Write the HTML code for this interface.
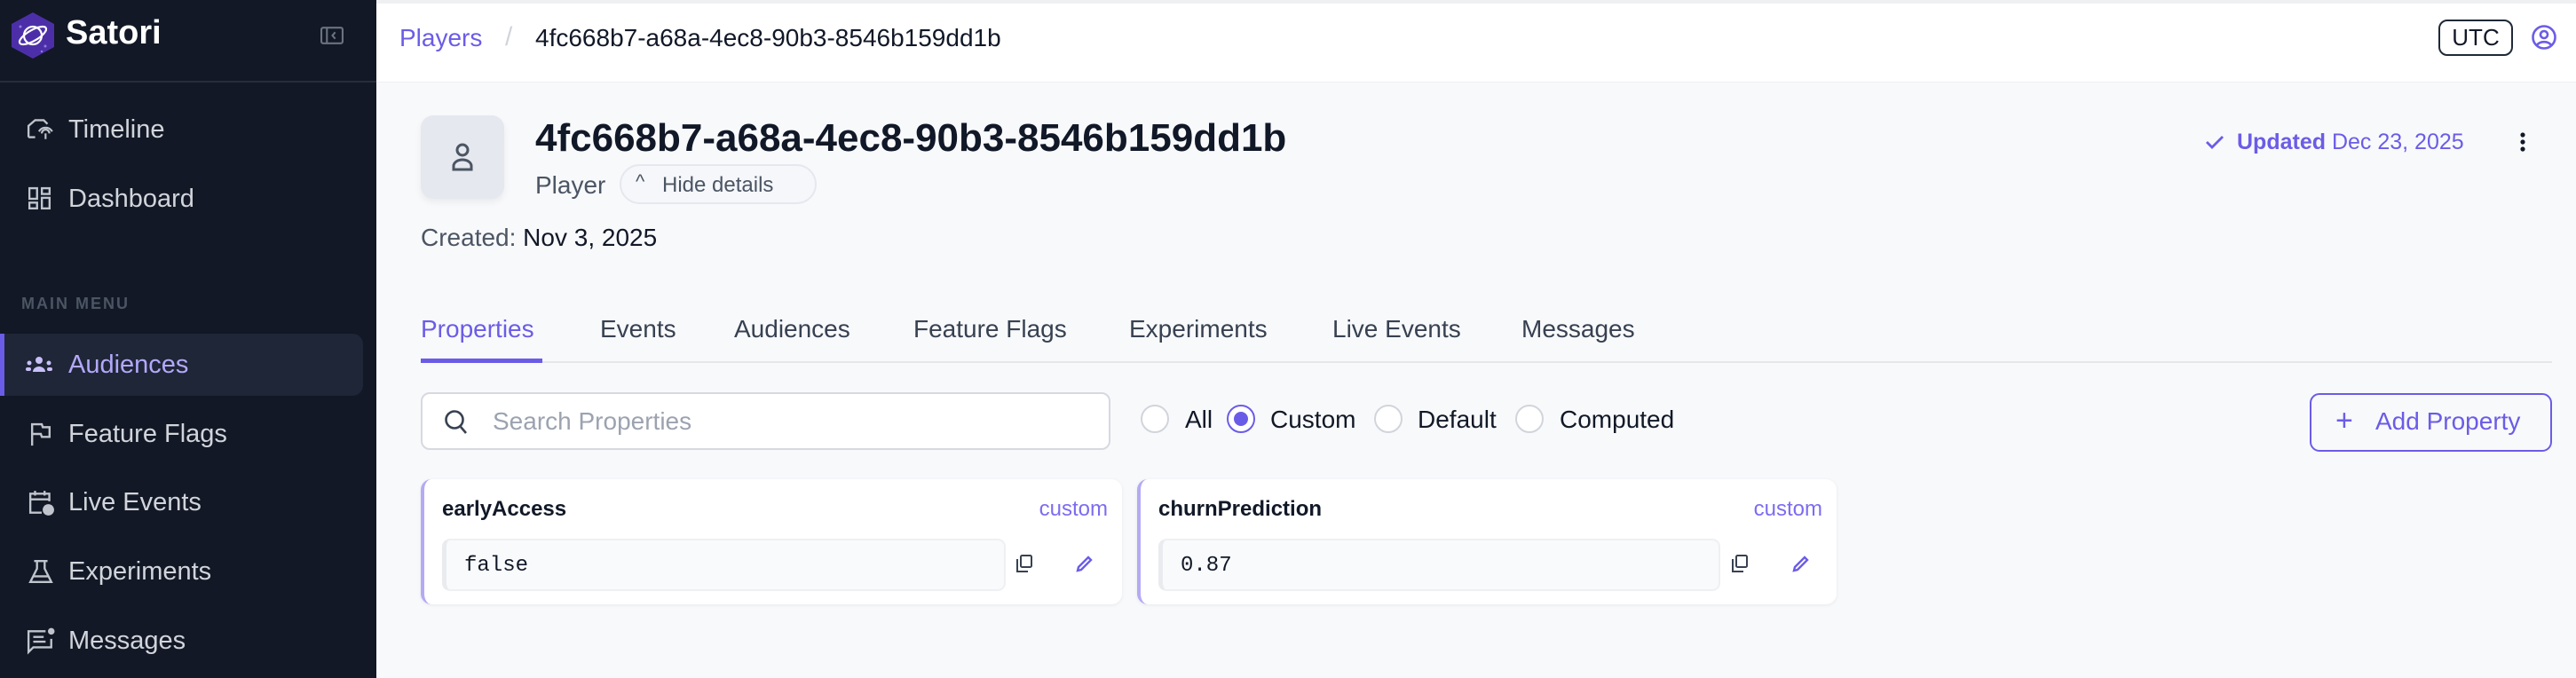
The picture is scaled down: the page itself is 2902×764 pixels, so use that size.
<!DOCTYPE html>
<html><head><meta charset="utf-8"><style>
*{box-sizing:border-box;margin:0;padding:0}
body{width:2902px;height:764px;overflow:hidden;background:#f8f9fb;font-family:"Liberation Sans",Arial,sans-serif;position:relative}
.a{position:absolute;white-space:nowrap}
#sb{position:absolute;left:0;top:0;width:424px;height:764px;background:#121826}
.nav{position:absolute;left:77px;font-size:29px;color:#d1d5db;line-height:1}
.ic{position:absolute;left:30px}
.tab{position:absolute;top:355px;font-size:28px;color:#374151}
.radio{position:absolute;top:456px;width:32px;height:32px;border:2px solid #d1d5db;border-radius:50%;background:#fff}
.rl{position:absolute;top:457px;font-size:28px;color:#111827}
.card{position:absolute;top:540px;height:141px;background:#fff;border-radius:12px;border-left:4px solid #b4aaf5;box-shadow:0 1px 4px rgba(0,0,0,.07)}
.ct{position:absolute;top:20px;left:20px;font-size:24px;font-weight:bold;color:#111827}
.cc{position:absolute;top:20px;right:16px;font-size:24px;color:#7c6cf0}
.vb{position:absolute;top:67px;left:20px;height:59px;background:#f9fafb;border:2px solid #eef0f3;border-left:5px solid #e9ebef;border-radius:9px}
.vt{position:absolute;top:15px;left:20px;font-family:"Liberation Mono",monospace;font-size:24px;color:#111827}
</style></head><body>
<div id="sb">
 <svg class="a" style="left:10px;top:12px" width="54" height="56" viewBox="0 0 52 56"><polygon points="26,2 50,15 50,41 26,54 2,41 2,15" fill="#4c2fa8"/><circle cx="12" cy="18" r="1.5" fill="#8f7ce0"/><circle cx="40" cy="40" r="1.5" fill="#8f7ce0"/><circle cx="36" cy="46" r="1.2" fill="#8f7ce0"/><circle cx="26" cy="28" r="10" fill="none" stroke="#fff" stroke-width="2.2"/><ellipse cx="26" cy="28" rx="17" ry="6" fill="none" stroke="#fff" stroke-width="2.2" transform="rotate(-30 26 28)"/></svg>
 <div class="a" style="left:74px;top:16px;font-size:38px;font-weight:bold;color:#fff">Satori</div>
 <svg class="a" style="left:361px;top:29px" width="26" height="22" viewBox="0 0 25 19"><rect x="1" y="1" width="23" height="17" rx="2" fill="none" stroke="#6b7280" stroke-width="2"/><line x1="7" y1="1" x2="7" y2="18" stroke="#6b7280" stroke-width="2"/><path d="M16 6 L13 9.5 L16 13" fill="none" stroke="#6b7280" stroke-width="2"/></svg>
 <div class="a" style="left:0;top:91px;width:424px;height:2px;background:#262d3b"></div>
 <svg class="ic" style="top:130px" width="32" height="30" viewBox="0 0 30 22"><path d="M2 20 V8 L9 2 H18 L22 6" fill="none" stroke="#c0c4cc" stroke-width="2.2"/><line x1="2" y1="20" x2="9" y2="20" stroke="#c0c4cc" stroke-width="2.2"/><path d="M13 14 a8 8 0 0 1 14 0 M16 16 a4 4 0 0 1 8 0" fill="none" stroke="#c0c4cc" stroke-width="2"/><line x1="20" y1="16" x2="20" y2="22" stroke="#c0c4cc" stroke-width="2"/></svg>
 <div class="nav" style="top:132px">Timeline</div>
 <svg class="ic" style="top:210px;left:32px" width="26" height="28" viewBox="0 0 24 24" fill="none" stroke="#c0c4cc" stroke-width="2.2"><rect x="1" y="1" width="8" height="11"/><rect x="1" y="16" width="8" height="6"/><rect x="14" y="1" width="8" height="6"/><rect x="14" y="11" width="8" height="11"/></svg>
 <div class="nav" style="top:210px">Dashboard</div>
 <div class="a" style="left:24px;top:332px;font-size:18px;font-weight:bold;letter-spacing:2px;color:#4b5563">MAIN MENU</div>
 <div class="a" style="left:0;top:376px;width:409px;height:70px;background:#1f2637;border-radius:0 12px 12px 0;border-left:5px solid #6b5ce7"></div>
 <svg class="ic" style="top:399px;left:28px" width="32" height="22" viewBox="0 0 32 18" fill="#c8bffa"><circle cx="16" cy="5" r="4"/><path d="M9 18 a7 6 0 0 1 14 0z"/><circle cx="5" cy="8" r="2.5"/><circle cx="27" cy="8" r="2.5"/><rect x="1" y="13" width="6" height="4" rx="2"/><rect x="25" y="13" width="6" height="4" rx="2"/></svg>
 <div class="nav" style="top:397px;color:#b3a8fa">Audiences</div>
 <svg class="ic" style="top:474px;left:34px" width="24" height="30" viewBox="0 0 22 24" fill="none" stroke="#c0c4cc" stroke-width="2.2"><path d="M2 24 V2 H12 L13 5 H20 V15 H12 L11 12 H2"/></svg>
 <div class="nav" style="top:475px">Feature Flags</div>
 <svg class="ic" style="top:551px;left:32px" width="30" height="32" viewBox="0 0 28 28" fill="none" stroke="#c0c4cc" stroke-width="2.2"><path d="M14 24 H2 V4 H22 V12"/><line x1="2" y1="10" x2="22" y2="10"/><line x1="7" y1="1" x2="7" y2="6"/><line x1="17" y1="1" x2="17" y2="6"/><circle cx="21" cy="21" r="6" fill="#c0c4cc" stroke="none"/></svg>
 <div class="nav" style="top:552px">Live Events</div>
 <svg class="ic" style="top:629px;left:32px" width="28" height="30" viewBox="0 0 26 26" fill="none" stroke="#c0c4cc" stroke-width="2.2"><path d="M6 2 H20 M9 2 V10 L2 24 H24 L17 10 V2"/><line x1="5" y1="18" x2="21" y2="18"/></svg>
 <div class="nav" style="top:630px">Experiments</div>
 <svg class="ic" style="top:706px;left:30px" width="32" height="32" viewBox="0 0 30 28" fill="none" stroke="#c0c4cc" stroke-width="2.2"><path d="M20 4 H2 V26 L7 21 H26 V12"/><line x1="7" y1="10" x2="18" y2="10"/><line x1="7" y1="15" x2="20" y2="15"/><circle cx="26" cy="4" r="3.5" fill="#c0c4cc" stroke="none"/></svg>
 <div class="nav" style="top:708px">Messages</div>
</div>
<div class="a" style="left:424px;top:0;width:2478px;height:92px;background:#fff;border-top:4px solid #eef0f2;box-shadow:0 1px 0 #eef0f3"></div>
<div class="a" style="left:450px;top:27px;font-size:28px;color:#6b5ce7">Players</div>
<div class="a" style="left:569px;top:25px;font-size:30px;color:#d1d5db">/</div>
<div class="a" style="left:603px;top:27px;font-size:28px;color:#111827">4fc668b7-a68a-4ec8-90b3-8546b159dd1b</div>
<div class="a" style="left:2747px;top:22px;width:84px;height:41px;border:2px solid #1f2937;border-radius:10px;font-size:26px;color:#111827;text-align:center;line-height:37px">UTC</div>
<svg class="a" style="left:2852px;top:28px" width="28" height="28" viewBox="0 0 28 28" fill="none" stroke="#6b5ce7" stroke-width="2.6"><circle cx="14" cy="14" r="12.5"/><circle cx="14" cy="11" r="4"/><path d="M6 23 a9 7 0 0 1 16 0"/></svg>
<div class="a" style="left:474px;top:130px;width:94px;height:94px;background:#e5e8ef;border-radius:14px;box-shadow:0 4px 8px rgba(0,0,0,.06)"></div>
<svg class="a" style="left:508px;top:160px" width="26" height="34" viewBox="0 0 26 34" fill="none" stroke="#4b5563" stroke-width="3"><circle cx="13" cy="9" r="6"/><path d="M3 31 V27 a10 7 0 0 1 20 0 V31 Z"/></svg>
<div class="a" style="left:603px;top:131px;font-size:44px;font-weight:bold;color:#111827">4fc668b7-a68a-4ec8-90b3-8546b159dd1b</div>
<div class="a" style="left:603px;top:193px;font-size:28px;color:#4b5563">Player</div>
<div class="a" style="left:698px;top:185px;width:222px;height:45px;border:2px solid #e5e8ee;border-radius:23px;background:#f5f7fa"></div>
<div class="a" style="left:716px;top:192px;font-size:22px;color:#4b5563">^</div>
<div class="a" style="left:746px;top:195px;font-size:24px;color:#4b5563">Hide details</div>
<div class="a" style="left:474px;top:252px;font-size:28px;color:#4b5563">Created: <span style="color:#111827">Nov 3, 2025</span></div>
<svg class="a" style="left:2484px;top:151px" width="22" height="18" viewBox="0 0 22 18" fill="none" stroke="#6b5ce7" stroke-width="2.8"><path d="M2 9 L8 15 L20 3"/></svg>
<div class="a" style="left:2520px;top:146px;font-size:25px;color:#6b5ce7"><b>Updated</b> Dec 23, 2025</div>
<svg class="a" style="left:2836px;top:148px" width="12" height="24" viewBox="0 0 12 24" fill="#111827"><circle cx="6" cy="4" r="2.6"/><circle cx="6" cy="12" r="2.6"/><circle cx="6" cy="20" r="2.6"/></svg>
<div class="tab" style="left:474px;color:#6b5ce7">Properties</div>
<div class="tab" style="left:676px">Events</div>
<div class="tab" style="left:827px">Audiences</div>
<div class="tab" style="left:1029px">Feature Flags</div>
<div class="tab" style="left:1272px">Experiments</div>
<div class="tab" style="left:1501px">Live Events</div>
<div class="tab" style="left:1714px">Messages</div>
<div class="a" style="left:474px;top:407px;width:2401px;height:2px;background:#e5e7eb"></div>
<div class="a" style="left:474px;top:404px;width:137px;height:5px;background:#6b5ce7"></div>
<div class="a" style="left:474px;top:442px;width:777px;height:65px;background:#fff;border:2px solid #d7d9e0;border-radius:10px"></div>
<svg class="a" style="left:500px;top:461px" width="28" height="30" viewBox="0 0 28 30" fill="none" stroke="#374151" stroke-width="2.6"><circle cx="12" cy="12" r="9.5"/><line x1="19" y1="20" x2="25" y2="27"/></svg>
<div class="a" style="left:555px;top:459px;font-size:28px;color:#9ca3af">Search Properties</div>
<div class="radio" style="left:1285px"></div>
<div class="rl" style="left:1335px">All</div>
<div class="radio" style="left:1382px;border-color:#6b5ce7"><div style="position:absolute;left:6px;top:6px;width:16px;height:16px;border-radius:50%;background:#6b5ce7"></div></div>
<div class="rl" style="left:1431px">Custom</div>
<div class="radio" style="left:1548px"></div>
<div class="rl" style="left:1597px">Default</div>
<div class="radio" style="left:1707px"></div>
<div class="rl" style="left:1757px">Computed</div>
<div class="a" style="left:2602px;top:443px;width:273px;height:66px;border:2px solid #6b5ce7;border-radius:11px"></div>
<div class="a" style="left:2631px;top:455px;font-size:34px;color:#6b5ce7;font-weight:300">+</div>
<div class="a" style="left:2676px;top:459px;font-size:28px;color:#6b5ce7">Add Property</div>
<div class="card" style="left:474px;width:790px">
 <div class="ct">earlyAccess</div><div class="cc">custom</div>
 <div class="vb" style="width:635px"><div class="vt">false</div></div>
</div>
<div class="card" style="left:1281px;width:788px">
 <div class="ct">churnPrediction</div><div class="cc">custom</div>
 <div class="vb" style="width:633px"><div class="vt">0.87</div></div>
</div>
<svg class="a" style="left:1145px;top:625px" width="18" height="20" viewBox="0 0 18 20" fill="none" stroke="#374151" stroke-width="2"><rect x="5" y="1" width="12" height="13" rx="1.5"/><path d="M1 5 V19 H13"/></svg>
<svg class="a" style="left:1951px;top:625px" width="18" height="20" viewBox="0 0 18 20" fill="none" stroke="#374151" stroke-width="2"><rect x="5" y="1" width="12" height="13" rx="1.5"/><path d="M1 5 V19 H13"/></svg>
<svg class="a" style="left:1212px;top:625px" width="20" height="20" viewBox="0 0 20 20"><path d="M2 18 L3 14 L14 3 L17 6 L6 17 Z" fill="none" stroke="#6b5ce7" stroke-width="2.4"/></svg>
<svg class="a" style="left:2019px;top:625px" width="20" height="20" viewBox="0 0 20 20"><path d="M2 18 L3 14 L14 3 L17 6 L6 17 Z" fill="none" stroke="#6b5ce7" stroke-width="2.4"/></svg>
</body></html>
